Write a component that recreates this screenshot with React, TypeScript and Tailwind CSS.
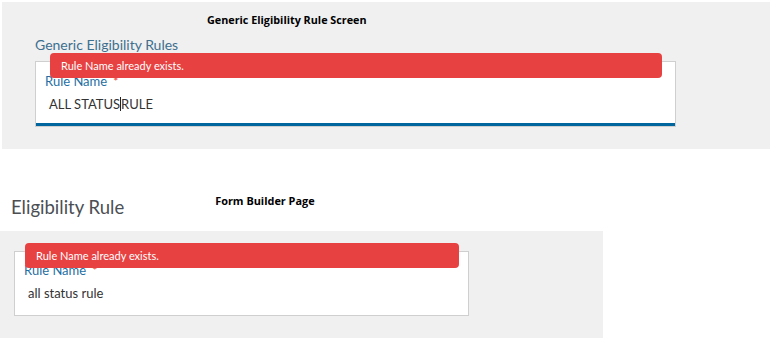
export default function App() {
  return (
    <div className="w-[770px] h-[338px] bg-white relative overflow-hidden" style={{ fontFamily: "Lato, 'Open Sans', sans-serif" }}>
      {/* first screen */}
      <div className="ml-[2px] mt-[2px] h-[147px] bg-[#f0f0f0] pt-[10px]">
        <div className="pl-[205px] pt-[1px] text-[10.8px] font-bold leading-[14px] text-black" style={{ fontFamily: "'Open Sans', sans-serif" }}>
          Generic Eligibility Rule Screen
        </div>
        <div className="pl-[33px] pt-[9px] text-[14px] leading-[17px] text-[#3d6f8f]">Generic Eligibility Rules</div>
        <div className="relative ml-[33px] mt-[8px] w-[641px] h-[66px] bg-white border border-[#cfcfcf] flex flex-col">
          <div className="absolute left-[14px] top-[-9px] w-[612px] h-[25px] rounded-[4px] bg-[#e84141] pl-[11px] text-[11px] leading-[25px] text-white">
            Rule Name already exists.
          </div>
          <div className="pl-[9px] pt-[11px] text-[13px] leading-[16px] text-[#1f6fa3]">
            Rule Name<span className="ml-[6px] text-[#e53935] text-[12px]">*</span>
          </div>
          <div className="pl-[13px] pt-[6px] text-[13px] leading-[16px] text-[#333]">
            ALL STATUS<span className="inline-block w-[1px] h-[14px] bg-[#222] align-[-2px]"></span>RULE
          </div>
          <div className="mt-auto h-[3px] bg-[#00669d]"></div>
        </div>
      </div>

      {/* second screen */}
      <div className="flex items-start h-[82px]">
        <div className="pl-[11px] pt-[46px] text-[18.5px] leading-[24px] text-[#4b4f54]">Eligibility Rule</div>
        <div className="pl-[91px] pt-[45px] text-[10.9px] font-bold leading-[14px] text-black" style={{ fontFamily: "'Open Sans', sans-serif" }}>
          Form Builder Page
        </div>
      </div>
      <div className="w-[603px] h-[107px] bg-[#f0f0f0] pt-[20px] pl-[14px]">
        <div className="relative w-[455px] h-[65px] bg-white border border-[#cfcfcf]">
          <div className="absolute left-[10px] top-[-9px] w-[434px] h-[25px] rounded-[4px] bg-[#e84141] pl-[11px] text-[11px] leading-[25px] text-white">
            Rule Name already exists.
          </div>
          <div className="pl-[9px] pt-[10px] text-[13px] leading-[16px] text-[#1f6fa3]">
            Rule Name<span className="ml-[6px] text-[#e53935] text-[12px]">*</span>
          </div>
          <div className="pl-[13px] pt-[6px] text-[13px] leading-[16px] text-[#333]">all status rule</div>
        </div>
      </div>
    </div>
  );
}
